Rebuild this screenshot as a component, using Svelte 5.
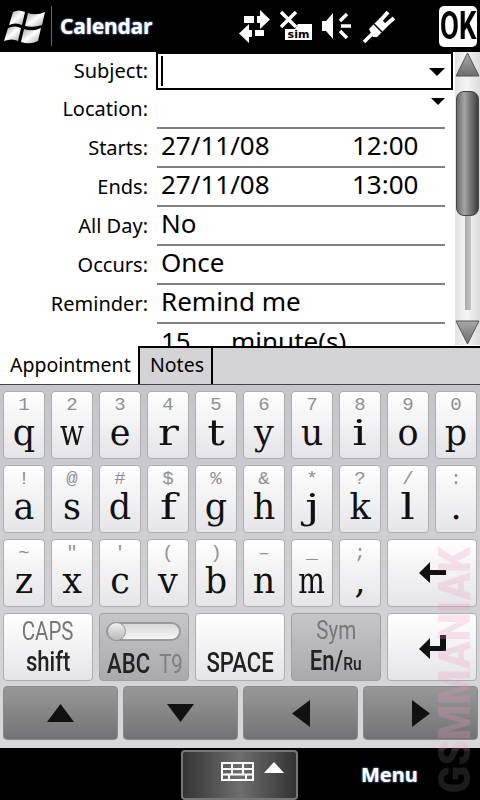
<script>
  const rows = [
    { label: 'Starts:', value: '27/11/08', time: '12:00' },
    { label: 'Ends:', value: '27/11/08', time: '13:00' },
    { label: 'All Day:', value: 'No' },
    { label: 'Occurs:', value: 'Once' },
    { label: 'Reminder:', value: 'Remind me' },
    { label: '', value: '15', time: 'minute(s)', short: true }
  ];

  const keysTop = [
    ['1', 'q'], ['2', 'w'], ['3', 'e'], ['4', 'r'], ['5', 't'],
    ['6', 'y'], ['7', 'u'], ['8', 'i'], ['9', 'o'], ['0', 'p'],
    ['!', 'a'], ['@', 's'], ['#', 'd'], ['$', 'f'], ['%', 'g'],
    ['&', 'h'], ['*', 'j'], ['?', 'k'], ['/', 'l'], [':', '.'],
    ['~', 'z'], ['"', 'x'], ["'", 'c'], ['(', 'v'], [')', 'b'],
    ['–', 'n'], ['_', 'm'], [';', ',']
  ];

  // the keyboard letters are monospaced in the original, so even out their widths
  const letterScale = { w: 0.8, m: 0.8, i: 1.3, j: 1.3, l: 1.3, f: 1.3, t: 1.25, r: 1.25 };
</script>

<div class="phone">
  <header class="topbar">
    <svg class="winlogo" width="42" height="38" viewBox="0 0 42 38">
      <defs>
        <linearGradient id="flag" x1="0" y1="0" x2="1" y2="1">
          <stop offset="0" stop-color="#9a9a9a" />
          <stop offset="0.5" stop-color="#ffffff" />
          <stop offset="1" stop-color="#a8a8a8" />
        </linearGradient>
      </defs>
      <path fill="url(#flag)" d="M9 4 Q15 1 21 4 L18 17 Q12 14 5 17 Z" />
      <path fill="url(#flag)" d="M24 5 Q32 8 41 4 L38 17 Q30 20 21 18 Z" />
      <path fill="url(#flag)" d="M4 20 Q11 17 17 20 L14 33 Q8 30 0 33 Z" />
      <path fill="url(#flag)" d="M20 21 Q29 24 37 20 L34 33 Q26 37 17 34 Z" />
    </svg>
    <span class="sep"></span>
    <span class="title">Calendar</span>
    <div class="status">
      <svg width="31" height="33" viewBox="0 0 31 33" fill="#fff">
        <path d="M5 6h10v7H5zM18 6h3V0l10 9.500-10 9.500v-6h-3z" />
        <path d="M0 23.500 10 14v6h3v7h-3v6zM16 20h9v6h-9z" />
      </svg>
      <svg width="32" height="30" viewBox="0 0 32 30">
        <path d="M1 1l15 15M16 1 1 16" stroke="#fff" stroke-width="3.500" />
        <path fill="#fff" d="M5 29V18h10l3-5h14v16z" />
        <text x="18.500" y="27" class="sim">sim</text>
      </svg>
      <svg width="29" height="28" viewBox="0 0 29 28" fill="#fff">
        <path d="M0 9h4l7-8v26l-7-8H0z" />
        <path d="M18 9l7-7M19 14h10M18 19l7 7" stroke="#fff" stroke-width="3.500" />
      </svg>
      <svg class="plug" width="32" height="33" viewBox="0 0 32 33" fill="#fff">
        <path d="M1 32l10-10" stroke="#fff" stroke-width="3.500" />
        <path d="M6 19 17 8l8 8-11 11h-4z" />
        <path d="M18 10l7-8M23 15l8-7" stroke="#fff" stroke-width="4" />
        <path d="M11 14l8 8" stroke="#000" stroke-width="1.500" />
      </svg>
    </div>
    <div class="ok"><span>OK</span></div>
  </header>

  <main class="form">
    <div class="fields">
      <div class="row first">
        <span class="label">Subject:</span>
        <div class="subject">
          <span class="caret"></span>
          <span class="drop"></span>
        </div>
      </div>
      <div class="row">
        <span class="label">Location:</span>
        <div class="value">
          <span class="drop loc"></span>
        </div>
      </div>
      {#each rows as row}
        <div class="row">
          <span class="label">{row.label}</span>
          <div class="value">
            <span class="val" class:short={row.short}>{row.value}</span>
            {#if row.time}<span class="time" class:short={row.short}>{row.time}</span>{/if}
          </div>
        </div>
      {/each}
    </div>
    <div class="scrollbar">
      <svg width="25" height="25" viewBox="0 0 25 25">
        <defs>
          <linearGradient id="arrow" x1="0" y1="0" x2="0" y2="1">
            <stop offset="0" stop-color="#a8a8a8" />
            <stop offset="1" stop-color="#6e6e6e" />
          </linearGradient>
        </defs>
        <path d="M12.500 1 24 24H1z" fill="url(#arrow)" stroke="#555" />
      </svg>
      <div class="thumb"></div>
      <div class="groove"></div>
      <svg class="down" width="25" height="25" viewBox="0 0 25 25">
        <path d="M12.500 24 24 1H1z" fill="url(#arrow)" stroke="#555" />
      </svg>
    </div>
  </main>

  <nav class="tabs">
    <span class="tab active">Appointment</span>
    <span class="tab">Notes</span>
    <span class="tabrest"></span>
  </nav>

  <section class="keyboard">
    <div class="keys">
      {#each keysTop as key}
        <div class="key">
          <span class="alt">{key[0]}</span>
          <span class="main" style="transform: scaleX({letterScale[key[1]] ?? 1})">{key[1]}</span>
        </div>
      {/each}
      <div class="key wide">
        <svg width="27" height="22" viewBox="0 0 27 22"><path d="M0 11 11 0v8h16v5H11v8z" fill="#111" /></svg>
      </div>

      <div class="key wide text">
        <span class="caps">CAPS</span>
        <span class="shift">shift</span>
      </div>
      <div class="key wide grey abc">
        <div class="toggle"><span class="knob"></span></div>
        <div class="abcline"><span class="abcmain">ABC</span><span class="t9">T9</span></div>
      </div>
      <div class="key wide space"><span class="shift">SPACE</span></div>
      <div class="key wide grey text">
        <span class="caps">Sym</span>
        <span class="shift">En/<small>Ru</small></span>
      </div>
      <div class="key wide">
        <svg width="27" height="24" viewBox="0 0 27 24"><path d="M0 14 11 3v8h10V0h6v16H11v8z" fill="#111" /></svg>
      </div>
    </div>

    <div class="arrows">
      <div class="arrowkey"><svg width="27" height="18" viewBox="0 0 27 18"><path d="M13.500 0 27 18H0z" fill="#111" /></svg></div>
      <div class="arrowkey"><svg width="27" height="18" viewBox="0 0 27 18"><path d="M13.500 18 27 0H0z" fill="#111" /></svg></div>
      <div class="arrowkey"><svg width="18" height="27" viewBox="0 0 18 27"><path d="M0 13.500 18 0v27z" fill="#111" /></svg></div>
      <div class="arrowkey"><svg width="18" height="27" viewBox="0 0 18 27"><path d="M18 13.500 0 0v27z" fill="#111" /></svg></div>
    </div>
  </section>

  <footer class="bottombar">
    <div class="kbbutton">
      <svg width="33" height="19" viewBox="0 0 33 19" fill="none" stroke="#fff" stroke-width="2">
        <path d="M1 1h31v17H1zM1 7h31M1 12.500h31M11 1v11.500M22 1v11.500M8 12.500V18M25 12.500V18" />
      </svg>
      <svg width="20" height="11" viewBox="0 0 20 11"><path d="M10 0 20 11H0z" fill="#fff" /></svg>
    </div>
    <span class="menu">Menu</span>
  </footer>

  <div class="watermark">GSMMANIAK</div>
</div>

<style>
  :global(body) {
    margin: 0;
    background: #000;
  }

  .phone {
    position: relative;
    width: 480px;
    height: 800px;
    overflow: hidden;
    background: #000;
    font-family: "Noto Sans", "DejaVu Sans", sans-serif;
  }

  .topbar {
    height: 52px;
    background: #000;
    display: flex;
    align-items: center;
    padding-left: 4px;
    box-sizing: border-box;
    color: #fff;
  }

  .topbar > * { flex: none; }

  .winlogo { margin-top: 1px; }

  .sep {
    width: 1px;
    height: 40px;
    margin-left: 5px;
    background: #6b6b6b;
  }

  .title {
    width: 92px;
    margin-left: 8px;
    font-size: 21px;
    font-weight: 700;
    letter-spacing: -0.2px;
    text-shadow: 0 0 2px #5d86b5, 0 0 2px #5d86b5;
  }

  .status {
    display: flex;
    align-items: center;
    gap: 10px;
    margin-left: 87px;
  }

  .status svg { flex: none; }

  .plug { margin-left: 2px; }

  .sim {
    font-family: "DejaVu Sans", sans-serif;
    font-size: 11px;
    font-weight: 700;
    text-anchor: middle;
    fill: #000;
  }

  .ok {
    width: 38px;
    height: 41px;
    margin-left: 44px;
    background: #fff;
    border-radius: 5px;
    display: flex;
    align-items: center;
    justify-content: center;
    overflow: hidden;
  }

  .ok span {
    flex: none;
    font-family: "Roboto", sans-serif;
    font-size: 38px;
    font-weight: 700;
    color: #000;
    transform: scaleX(0.72);
  }

  .form {
    height: 294px;
    background: #fff;
    display: flex;
    overflow: hidden;
  }

  .fields {
    width: 455px;
    flex: none;
  }

  .row {
    display: flex;
    height: 39px;
    box-sizing: border-box;
  }

  .row.first { height: 38px; }

  .label {
    width: 148px;
    flex: none;
    text-align: right;
    font-size: 20px;
    line-height: 37px;
    white-space: nowrap;
    color: #000;
  }

  .subject {
    position: relative;
    width: 297px;
    height: 38px;
    margin: 0 0 0 8px;
    border: 2px solid #000;
    box-sizing: border-box;
  }

  .caret {
    position: absolute;
    left: 3px;
    top: 2px;
    width: 2px;
    height: 30px;
    background: #000;
  }

  .drop {
    position: absolute;
    right: 6px;
    top: 14px;
    border-left: 8px solid transparent;
    border-right: 8px solid transparent;
    border-top: 8px solid #000;
  }

  .drop.loc {
    right: 0;
    top: 8px;
    border-left-width: 7px;
    border-right-width: 7px;
    border-top-width: 7px;
  }

  .value {
    position: relative;
    width: 288px;
    margin-left: 9px;
    height: 39px;
    box-sizing: border-box;
    border-bottom: 2px solid #808080;
    display: flex;
    align-items: center;
    padding: 0 0 6px 4px;
    font-size: 26px;
    color: #000;
  }

  .row:last-child .value { border-bottom: none; }

  .val {
    width: 191px;
    flex: none;
    white-space: nowrap;
  }

  .val.short { width: 70px; }

  .time { white-space: nowrap; }

  .scrollbar {
    width: 25px;
    height: 293px;
    flex: none;
    position: relative;
    display: flex;
    flex-direction: column;
    align-items: center;
    background: linear-gradient(90deg, #e2e2e2, #f4f4f4 45%, #dcdcdc);
  }

  .scrollbar svg { flex: none; }

  .thumb {
    width: 23px;
    height: 125px;
    margin-top: 14px;
    flex: none;
    box-sizing: border-box;
    border: 1px solid #444;
    border-radius: 8px;
    background: linear-gradient(90deg, #6a6a6a, #a4a4a4 35%, #6c6c6c 70%, #3e3e3e);
  }

  .groove {
    width: 6px;
    flex: 1;
    background: linear-gradient(90deg, #aaa, #c4c4c4);
    margin-bottom: 10px;
  }

  .tabs {
    height: 39px;
    display: flex;
    box-sizing: border-box;
    border-bottom: 1px solid #444;
    background: #d4d3d6;
  }

  .tab {
    font-size: 19.500px;
    line-height: 34px;
    width: 73px;
    padding: 0 0 0 10px;
    box-sizing: border-box;
    border-top: 2px solid #000;
    border-left: 2px solid #000;
    color: #000;
  }

  .tab.active {
    width: 138px;
    padding: 0 0 0 10px;
    background: #fff;
    border: none;
    line-height: 38px;
    white-space: nowrap;
  }

  .tabrest {
    flex: 1;
    border-top: 2px solid #000;
    border-left: 2px solid #000;
  }

  .keyboard {
    height: 363px;
    background: linear-gradient(#c6c5cb, #d8d8dc);
    padding: 6px 0 0 3px;
    box-sizing: border-box;
  }

  .keys {
    display: grid;
    grid-template-columns: repeat(10, 42px);
    grid-auto-rows: 68px;
    column-gap: 6px;
    row-gap: 6px;
  }

  .key {
    position: relative;
    box-sizing: border-box;
    border: 1px solid #aeadb0;
    border-radius: 4px;
    background: linear-gradient(#ffffff, #e5e4e7);
    display: flex;
    flex-direction: column;
    align-items: center;
    justify-content: center;
    overflow: hidden;
  }

  .key.wide { grid-column: span 2; }

  .key.grey {
    background: linear-gradient(#c6c5c8, #aaa9ac);
    border-color: #a0a0a2;
  }

  .alt {
    font-family: "Liberation Mono", monospace;
    font-size: 19px;
    line-height: 20px;
    color: #8f8f94;
    margin-top: -5px;
  }

  .main {
    font-family: "DejaVu Serif", serif;
    font-size: 35px;
    line-height: 36px;
    color: #111;
  }

  .caps {
    font-family: "Roboto", sans-serif;
    font-size: 25px;
    line-height: 30px;
    color: #777;
    transform: scaleX(0.82);
  }

  .shift {
    font-family: "Roboto", sans-serif;
    font-size: 27px;
    line-height: 30px;
    color: #222;
    font-weight: 500;
    transform: scaleX(0.82);
    white-space: nowrap;
  }

  .shift small { font-size: 19px; }

  .space .shift { margin-top: 32px; }

  .abc {
    justify-content: flex-start;
    align-items: flex-start;
    padding: 8px 0 0 6px;
  }

  .toggle {
    position: relative;
    width: 71px;
    height: 15px;
    border: 2px solid #999;
    border-radius: 11px;
    background: linear-gradient(#d8d8d8, #f6f6f6);
  }

  .knob {
    position: absolute;
    left: -1px;
    top: -2px;
    width: 19px;
    height: 19px;
    border-radius: 50%;
    border: 1px solid #999;
    box-sizing: border-box;
    background: linear-gradient(#f0f0f0, #b8b8b8);
  }

  .abcline {
    display: flex;
    align-items: baseline;
    gap: 11px;
    margin: 7px 0 0 1px;
    transform: scaleX(0.82);
    transform-origin: left;
    font-family: "Roboto", sans-serif;
    white-space: nowrap;
  }

  .abcmain {
    font-size: 27px;
    font-weight: 500;
    color: #222;
  }

  .t9 {
    font-size: 25px;
    color: #7f7f7f;
  }

  .arrows {
    display: flex;
    gap: 5px;
    margin-top: 5px;
  }

  .arrowkey {
    width: 115px;
    height: 54px;
    flex: none;
    box-sizing: border-box;
    border: 1px solid #8a8a8a;
    border-radius: 4px;
    background: linear-gradient(#989898, #737375);
    display: flex;
    align-items: center;
    justify-content: center;
  }

  .bottombar {
    height: 52px;
    background: #000;
    position: relative;
    display: flex;
    align-items: center;
    padding-top: 1px;
    box-sizing: border-box;
  }

  .kbbutton {
    width: 117px;
    height: 50px;
    margin-left: 181px;
    flex: none;
    box-sizing: border-box;
    border: 2px solid #777;
    border-radius: 4px;
    background: linear-gradient(90deg, #333, #6e6e6e 50%, #333);
    display: flex;
    align-items: flex-start;
    gap: 10px;
    padding: 10px 0 0 38px;
  }

  .menu {
    margin-left: 63px;
    color: #fff;
    font-size: 20px;
    font-weight: 700;
    text-shadow: 0 0 2px #5d86b5, 0 0 2px #5d86b5;
  }

  .watermark {
    position: absolute;
    left: 454px;
    top: 670px;
    transform: translate(-50%, -50%) rotate(-90deg) scaleX(0.9);
    font-family: "Roboto", sans-serif;
    font-size: 45px;
    line-height: 45px;
    font-weight: 900;
    white-space: nowrap;
    color: transparent;
    background: linear-gradient(90deg, rgba(255, 255, 255, 0.11) 17%, rgba(235, 150, 190, 0.25) 17%);
    -webkit-background-clip: text;
    background-clip: text;
    pointer-events: none;
  }
</style>
